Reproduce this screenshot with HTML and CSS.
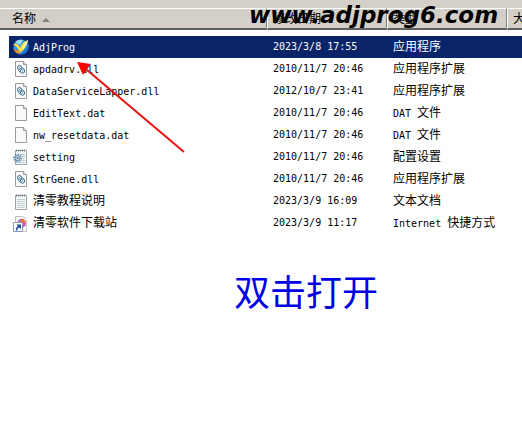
FILE: index.html
```html
<!DOCTYPE html>
<html lang="zh-CN">
<head>
  <meta charset="UTF-8">
  <meta name="viewport" content="width=device-width, initial-scale=1.0">
  <title>AdjProg</title>
  <link rel="stylesheet" href="styles.css">
</head>
<body>
  <!-- shared file icons -->
  <svg class="icon-defs" aria-hidden="true">
    <symbol id="page" viewBox="0 0 16 16">
      <path d="M2.5 .5h8l3 3v12h-11z" fill="#fafafa" stroke="#9a9a9a"/>
      <path d="M10.5 .5v3h3" fill="#e4e4e4" stroke="#9a9a9a"/>
    </symbol>
    <symbol id="dll" viewBox="0 0 16 16">
      <use href="#page"/>
      <g fill="#dcebf5" stroke="#47708f">
        <circle cx="6.5" cy="6.5" r="2"/>
        <circle cx="9.5" cy="10" r="2.2"/>
      </g>
      <path d="M6 6.5h1M9 10h1M4.5 8.500l3 3M8.500 5.500l3 3" stroke="#6f98b5"/>
    </symbol>
    <symbol id="notes" viewBox="0 0 16 16">
      <path d="M2.500 1.500h11v14h-11z" fill="#f7fafb" stroke="#9aa4a8"/>
      <path d="M3 1.500h10" stroke="#6f7b80" stroke-width="2" stroke-dasharray="1 1"/>
      <path d="M4 5.500h8M4 7.500h8M4 9.500h8M4 11.500h8M4 13.500h8" stroke="#bccbd2"/>
    </symbol>
    <symbol id="setting" viewBox="0 0 16 16">
      <use href="#notes"/>
      <circle cx="4.500" cy="9" r="3.500" fill="none" stroke="#6f95ad" stroke-width="2" stroke-dasharray="1.400 1.300"/>
      <circle cx="4.500" cy="9" r="2.500" fill="#d5e5ee" stroke="#5f88a3"/>
      <circle cx="4.500" cy="9" r="1" fill="#47708f"/>
    </symbol>
  </svg>

  <header class="top-bar"></header>
  <main class="window">
    <table class="files">
      <colgroup>
        <col class="col-name">
        <col class="col-date">
        <col class="col-type">
        <col>
      </colgroup>
      <thead>
        <tr>
          <th>名称 <svg class="sort" viewBox="0 0 8 4"><path d="M0 4l4-4 4 4z"/></svg></th>
          <th>修改日期</th>
          <th>类型</th>
          <th>大</th>
        </tr>
      </thead>
      <tbody>
        <tr class="selected">
          <td><svg class="icon" viewBox="0 0 16 16"><circle cx="8" cy="8" r="7.500" fill="#2f98e4"/><path d="M2 3Q5 0 10 1L7 6z" fill="#9be0fa"/><path d="M0 5q5-2 7 4 2-6 8-8-1 8-8 13Q5 8 0 5z" fill="#ffe04a"/><path d="M9 10q1-5 6-9-1 6-6 9z" fill="#fff7c0"/><path d="M0 9q2 6 7 5.500L6 11q-3 1-6-2z" fill="#f28a22"/><path d="M15 4q2 6-2 9-3 3-6 2Q13 11 15 4z" fill="#1c74cf"/></svg><span class="en">AdjProg</span></td>
          <td class="en">2023/3/8 17:55</td>
          <td>应用程序</td>
          <td></td>
        </tr>
        <tr>
          <td><svg class="icon"><use href="#dll"/></svg><span class="en">apdadrv.dll</span></td>
          <td class="en">2010/11/7 20:46</td>
          <td>应用程序扩展</td>
          <td></td>
        </tr>
        <tr>
          <td><svg class="icon"><use href="#dll"/></svg><span class="en">DataServiceLapper.dll</span></td>
          <td class="en">2012/10/7 23:41</td>
          <td>应用程序扩展</td>
          <td></td>
        </tr>
        <tr>
          <td><svg class="icon"><use href="#page"/></svg><span class="en">EditText.dat</span></td>
          <td class="en">2010/11/7 20:46</td>
          <td><span class="en">DAT </span>文件</td>
          <td></td>
        </tr>
        <tr>
          <td><svg class="icon"><use href="#page"/></svg><span class="en">nw_resetdata.dat</span></td>
          <td class="en">2010/11/7 20:46</td>
          <td><span class="en">DAT </span>文件</td>
          <td></td>
        </tr>
        <tr>
          <td><svg class="icon"><use href="#setting"/></svg><span class="en">setting</span></td>
          <td class="en">2010/11/7 20:46</td>
          <td>配置设置</td>
          <td></td>
        </tr>
        <tr>
          <td><svg class="icon"><use href="#dll"/></svg><span class="en">StrGene.dll</span></td>
          <td class="en">2010/11/7 20:46</td>
          <td>应用程序扩展</td>
          <td></td>
        </tr>
        <tr>
          <td><svg class="icon"><use href="#notes"/></svg>清零教程说明</td>
          <td class="en">2023/3/9 16:09</td>
          <td>文本文档</td>
          <td></td>
        </tr>
        <tr>
          <td><svg class="icon" viewBox="0 0 16 16"><path d="M2.500 .500h8l3 3v12h-11z" fill="#fafafa" stroke="#c4c4c4"/><path d="M7 7V3q5-1 6 4z" fill="#ef6b3f"/><path d="M7 3q-3 1-2 4h3z" fill="#9a7be0"/><path d="M13 7q0 4-4 5V7z" fill="#c65bc4"/><path d="M.500 6.500h9v9h-9z" fill="#fff" stroke="#8c9aa8"/><path d="M3 14.500q-1-3 2-4L3.500 8.500H8v4.500L6.500 11.500q-3 1-2 3z" fill="#164a9c"/></svg>清零软件下载站</td>
          <td class="en">2023/3/9 11:17</td>
          <td><span class="en">Internet </span>快捷方式</td>
          <td></td>
        </tr>
      </tbody>
    </table>

    <p class="hint">双击打开</p>

    <div class="watermark">www.adjprog6.com</div>
    <svg class="arrow" viewBox="0 0 108 92" aria-hidden="true">
      <path d="M107 90L10 8" stroke="#ee1111" stroke-width="2"/>
      <path d="M0 0l14 2-8 11z" fill="#ff0000"/>
    </svg>
  </main>
</body>
</html>
```

FILE: styles.css
```css
body {
  margin: 0;
  background: #fff;
  color: #000;
  font-family: "Liberation Sans", "Noto Sans CJK SC", sans-serif;
  font-size: 12px;
  overflow-x: hidden;
}

.icon-defs {
  position: absolute;
  width: 0;
  height: 0;
}

.top-bar {
  height: 8px;
  background: #d4d0c8;
}

.window {
  position: relative;
}

.files {
  width: 100%;
  table-layout: fixed;
  border-collapse: separate;
  border-spacing: 0;
}

.col-name {
  width: 267px;
}

.col-date,
.col-type {
  width: 120px;
}

.files th {
  padding: 1px 0 0 5px;
  background: #d4d0c8;
  border-top: 1px solid #fff;
  border-left: 1px solid #fff;
  border-right: 1px solid #808080;
  border-bottom: 2px solid #606060;
  font-weight: normal;
  line-height: 18px;
  text-align: left;
  white-space: nowrap;
}

.files th:first-child {
  padding-left: 12px;
  border-left: 0;
}

.files th:last-child {
  border-right: 0;
}

.sort {
  width: 8px;
  height: 4px;
  margin-left: 3px;
  vertical-align: middle;
  fill: #808080;
}

/* space between the header and the first row */
.files tbody::before {
  content: "";
  display: block;
  height: 6px;
}

.files td {
  height: 22px;
  padding: 0 0 0 6px;
  line-height: 20px;
  white-space: nowrap;
}

.files td:first-child {
  padding-left: 4px;
  border-left: 9px solid #fff;
}

.selected td {
  background: #0a246a;
  color: #fff;
}

.en,
.files td.en {
  font-family: "DejaVu Sans Mono", monospace;
  font-size: 10px;
  white-space: pre;
}

.icon {
  width: 16px;
  height: 16px;
  margin-right: 4px;
  vertical-align: middle;
}

.hint {
  margin: 30px 0 0;
  padding-left: 90px;
  color: #0000e6;
  font-family: "Noto Sans CJK SC", sans-serif;
  font-size: 36px;
  line-height: 52px;
  text-align: center;
}

.watermark {
  position: absolute;
  top: -13px;
  left: 249px;
  font-family: "DejaVu Sans", sans-serif;
  font-size: 23px;
  font-style: italic;
  font-weight: 700;
  line-height: 40px;
}

.arrow {
  position: absolute;
  top: 54px;
  left: 77px;
  width: 108px;
  height: 92px;
}
```
